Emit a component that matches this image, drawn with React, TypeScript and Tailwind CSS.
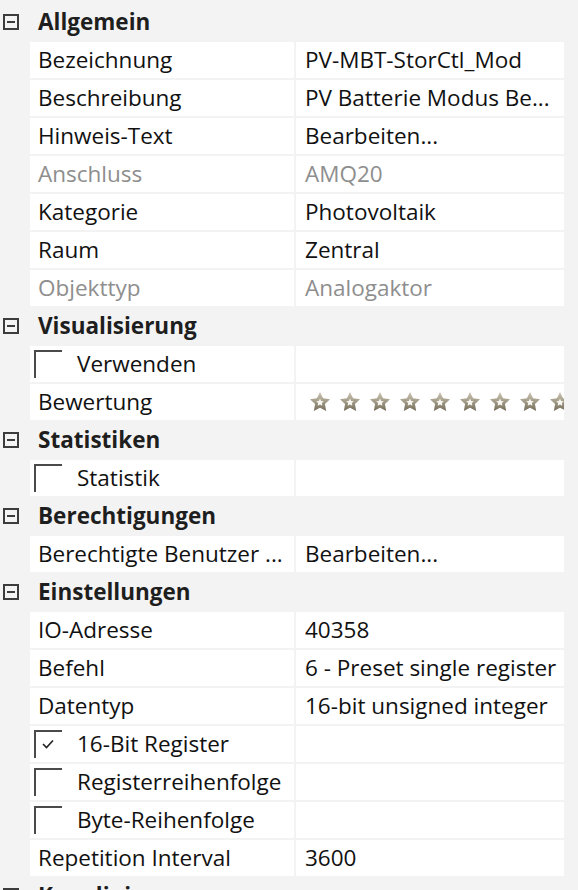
import React from "react";

type Row =
  | { kind: "header"; label: string }
  | { kind: "prop"; label: string; value?: string; disabled?: boolean }
  | { kind: "check"; label: string; checked?: boolean }
  | { kind: "stars"; label: string };

const ROWS: Row[] = [
  { kind: "header", label: "Allgemein" },
  { kind: "prop", label: "Bezeichnung", value: "PV-MBT-StorCtl_Mod" },
  { kind: "prop", label: "Beschreibung", value: "PV Batterie Modus Be..." },
  { kind: "prop", label: "Hinweis-Text", value: "Bearbeiten..." },
  { kind: "prop", label: "Anschluss", value: "AMQ20", disabled: true },
  { kind: "prop", label: "Kategorie", value: "Photovoltaik" },
  { kind: "prop", label: "Raum", value: "Zentral" },
  { kind: "prop", label: "Objekttyp", value: "Analogaktor", disabled: true },
  { kind: "header", label: "Visualisierung" },
  { kind: "check", label: "Verwenden" },
  { kind: "stars", label: "Bewertung" },
  { kind: "header", label: "Statistiken" },
  { kind: "check", label: "Statistik" },
  { kind: "header", label: "Berechtigungen" },
  { kind: "prop", label: "Berechtigte Benutzer ...", value: "Bearbeiten..." },
  { kind: "header", label: "Einstellungen" },
  { kind: "prop", label: "IO-Adresse", value: "40358" },
  { kind: "prop", label: "Befehl", value: "6 - Preset single register" },
  { kind: "prop", label: "Datentyp", value: "16-bit unsigned integer" },
  { kind: "check", label: "16-Bit Register", checked: true },
  { kind: "check", label: "Registerreihenfolge" },
  { kind: "check", label: "Byte-Reihenfolge" },
  { kind: "prop", label: "Repetition Interval", value: "3600" },
  { kind: "header", label: "Kennlinie" },
];

function MinusBox() {
  return (
    <span className="ml-[3px] flex h-[16px] w-[16px] items-center justify-center border-2 border-[#3c3c3c]">
      <span className="h-[2px] w-[8px] bg-[#3c3c3c]" />
    </span>
  );
}

function CheckBox({ checked }: { checked?: boolean }) {
  return (
    <span className="relative h-[28px] w-[28px] shrink-0 border-l-2 border-t-2 border-[#4a4a4a]">
      {checked && (
        <svg
          className="absolute left-[6px] top-[7px]"
          width="12"
          height="10"
          viewBox="0 0 12 10"
        >
          <path d="M1 5 L4.5 8.5 L11 1.5" fill="none" stroke="#222" strokeWidth="1.6" />
        </svg>
      )}
    </span>
  );
}

// hollow rating star, grey-beige gradient like the win32 control
function Star() {
  return (
    <svg width="22" height="22" viewBox="0 0 22 22" className="shrink-0">
      <defs>
        <linearGradient id="starGrad" x1="0" y1="0" x2="0" y2="1">
          <stop offset="0" stopColor="#c9c4b2" />
          <stop offset="0.5" stopColor="#a29b87" />
          <stop offset="1" stopColor="#746d5a" />
        </linearGradient>
      </defs>
      <path
        d="M11 1 L14.06 7.29 L20.99 8.26 L15.95 13.11 L17.17 19.99 L11 16.7 L4.83 19.99 L6.05 13.11 L1.01 8.26 L7.94 7.29 Z"
        fill="url(#starGrad)"
      />
      <path
        d="M11 7.5 L12.2 9.9 L14.8 10.3 L12.9 12.1 L13.3 14.7 L11 13.5 L8.7 14.7 L9.1 12.1 L7.2 10.3 L9.8 9.9 Z"
        fill="#f7f6f1"
      />
    </svg>
  );
}

export default function App() {
  return (
    <div className="h-[890px] w-[578px] overflow-hidden bg-[#f3f3f3] pt-[2px] font-['Open_Sans',sans-serif] text-[22.5px] leading-none text-[#111]">
      {ROWS.map((row, i) => {
        if (row.kind === "header") {
          return (
            <div key={i} className="mt-[2px] flex h-[36px] items-center">
              <div className="flex w-[30px] items-center">
                <MinusBox />
              </div>
              <span className="pl-[8px] font-bold text-[#1e1e1e]">{row.label}</span>
            </div>
          );
        }
        return (
          <div key={i} className="mt-[2px] ml-[30px] flex h-[36px] gap-[2px]">
            <div className="flex w-[264px] items-center overflow-hidden bg-white pl-[8px]">
              {row.kind === "check" ? (
                <div className="flex items-center gap-[15px]">
                  <span className="-ml-[4px] flex">
                    <CheckBox checked={row.checked} />
                  </span>
                  <span className="whitespace-nowrap">{row.label}</span>
                </div>
              ) : (
                <span className={`whitespace-nowrap ${row.kind === "prop" && row.disabled ? "text-[#8e8e8e]" : ""}`}>
                  {row.label}
                </span>
              )}
            </div>
            <div className="flex w-[268px] items-center overflow-hidden bg-white pl-[9px]">
              {row.kind === "prop" && (
                <span className={`whitespace-nowrap ${row.disabled ? "text-[#8e8e8e]" : ""}`}>
                  {row.value}
                </span>
              )}
              {row.kind === "stars" && (
                <div className="flex gap-[8px] pl-[4px]">
                  {Array.from({ length: 9 }).map((_, k) => (
                    <Star key={k} />
                  ))}
                </div>
              )}
            </div>
          </div>
        );
      })}
    </div>
  );
}
